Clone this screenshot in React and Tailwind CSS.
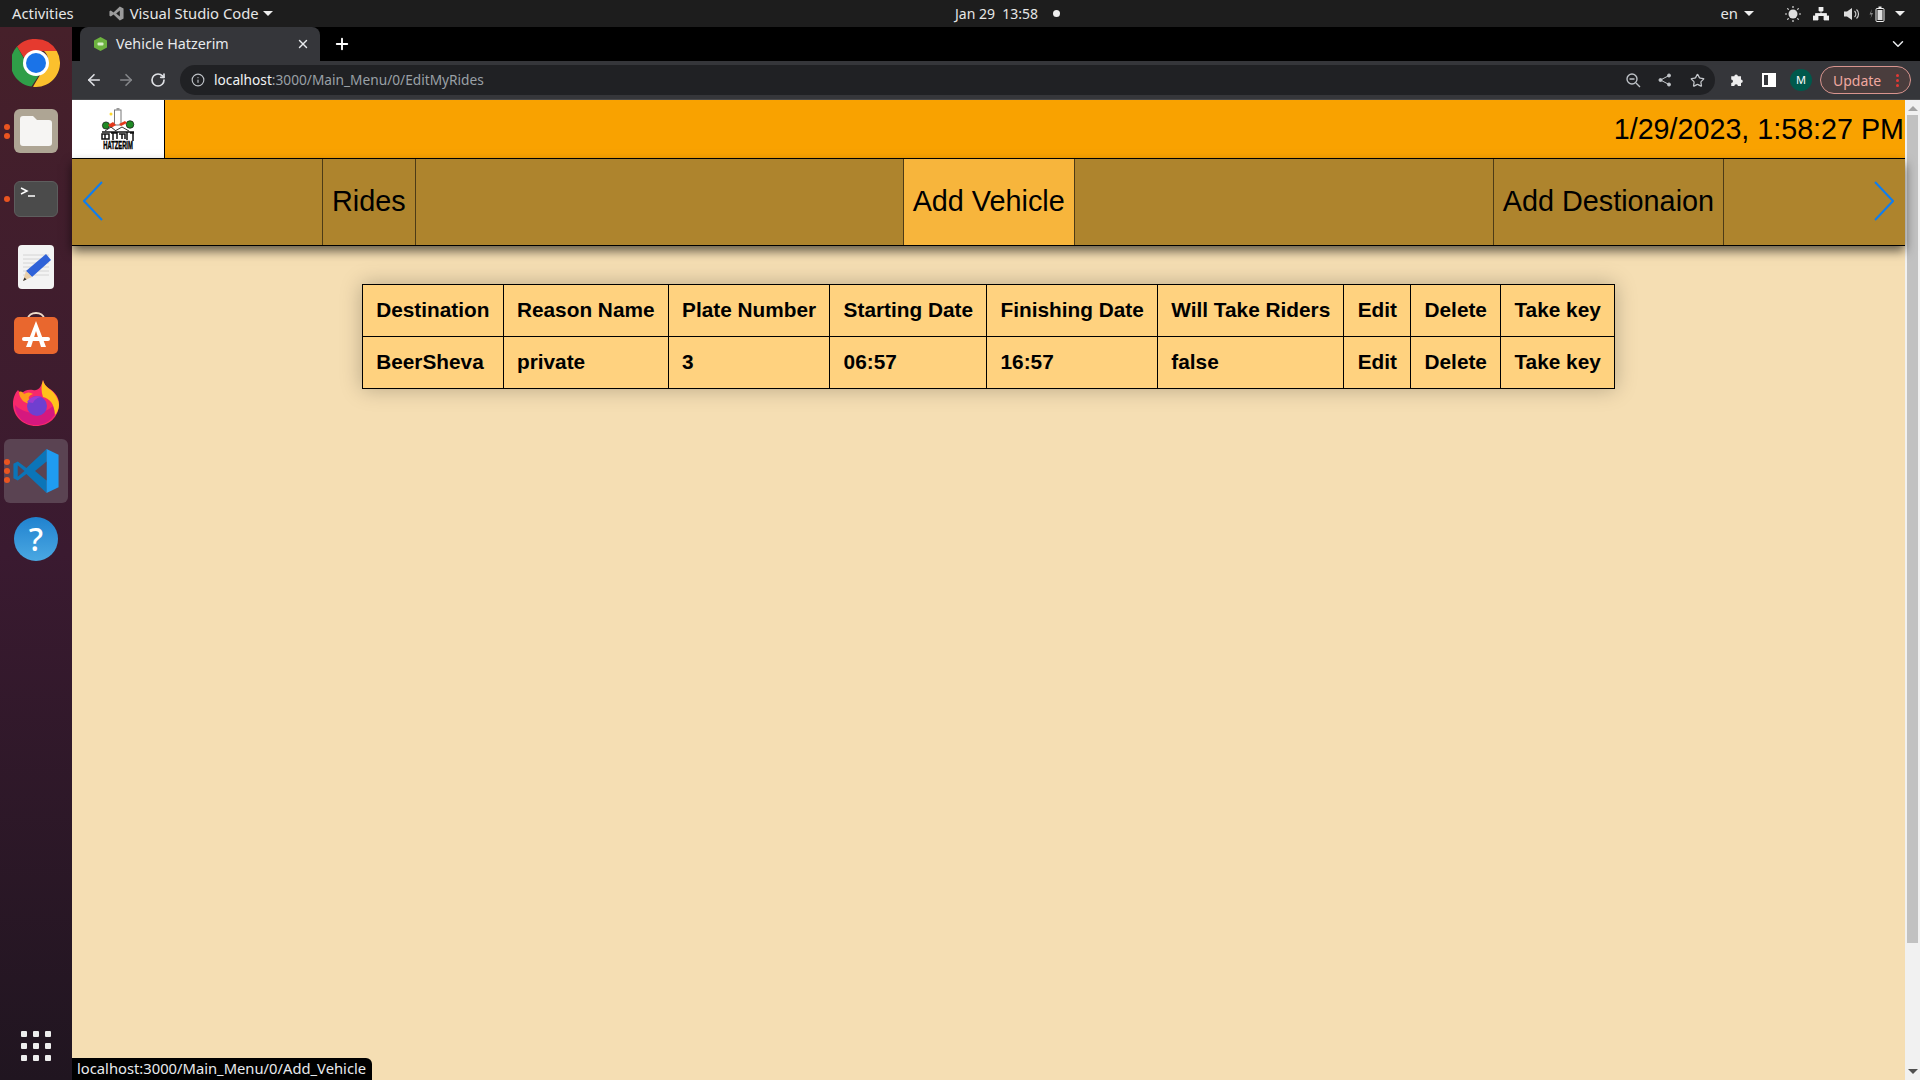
import { ArrowLeft, ArrowRight, RotateCw, Info, Star, X, Plus, ChevronDown } from "lucide-react";

const chromeFont = { fontFamily: '"Noto Sans", sans-serif' };

function ChromeLogo() {
    return (
        <svg width="48" height="48" viewBox="0 0 48 48">
            <path d="M24 0a24 24 0 0 1 20.8 12H24a12 12 0 0 0-11.3 8L5 7.5A24 24 0 0 1 24 0z" fill="#e53a2f" />
            <path d="M5 7.5 14 23a10 10 0 0 0 14 11.7L19.500 47.600A24 24 0 0 1 5 7.500z" fill="#2f9e48" />
            <path d="M44.800 12A24 24 0 0 1 21 47.800L31 31a12 12 0 0 0 1-19z" fill="#fbc02d" />
            <circle cx="24" cy="24" r="13" fill="#fff" />
            <circle cx="24" cy="24" r="10" fill="#1a73e8" />
        </svg>
    );
}

function FilesIcon() {
    return (
        <svg width="46" height="46" viewBox="0 0 46 46">
            <rect x="1" y="1" width="44" height="44" rx="6" fill="#aea594" />
            <path d="M7 11a3 3 0 0 1 3-3h10l4 4h12a3 3 0 0 1 3 3v20a3 3 0 0 1-3 3H10a3 3 0 0 1-3-3z" fill="#f6f5f3" />
        </svg>
    );
}

function TerminalIcon() {
    return (
        <div className="w-[44px] h-[36px] rounded-md bg-[#4b4b4b] border border-[#5e5e5e] relative">
            <svg width="44" height="36" viewBox="0 0 44 36" className="absolute top-0 left-0">
                <path d="M6 6l6 3-6 3M13 14h7" stroke="#fff" strokeWidth="1.500" fill="none" />
            </svg>
        </div>
    );
}

function WriterIcon() {
    return (
        <svg width="38" height="46" viewBox="0 0 38 46">
            <rect x="1" y="1" width="36" height="44" rx="4" fill="#f3f3f3" />
            <path d="M6 11h26M6 15h26M6 19h26M6 23h26M6 27h26M6 31h26" stroke="#d4d4d4" strokeWidth="1" />
            <path d="M29 10l5 6-19 17-6-6z" fill="#2f62d8" />
            <path d="M9 27l6 6-9 4z" fill="#e9cfa9" />
            <path d="M7.500 33.500 6 37l3.500-1.500z" fill="#333" />
        </svg>
    );
}

function AppCenterIcon() {
    return (
        <svg className="-mt-[4px]" width="44" height="42" viewBox="0 0 44 42">
            <path d="M14 7C14 -1 30 -1 30 7" stroke="#f0ddcb" strokeWidth="2" fill="none" />
            <rect x="0" y="5" width="44" height="37" rx="5" fill="#e9672e" />
            <path d="M22 9 32 35h-5l-5-16-5 16h-5z" fill="#fff" />
            <rect x="8" y="25" width="28" height="4" rx="2" fill="#fff" />
        </svg>
    );
}

function FirefoxIcon() {
    return (
        <svg width="46" height="46" viewBox="0 0 46 46">
            <path d="M23 46C10 46 0 36 0 24 0 18 2 13 5 10l3 4c3-4 8-5 12-4 5 1 8-2 10-10 1 4 3 7 7 9 6 4 9 9 9 15 0 13-10 22-23 22z" fill="#f7296b" />
            <path d="M23 45C11 45 2 36 2 25c7 8 28 14 42-3 1 13-8 23-21 23z" fill="#d5187f" />
            <path d="M30 0c1 5 5 8 9 11 5 5 7 10 7 14 0 4-2 8-4 10-1-12-5-16-12-18-2-6-2-11 0-17z" fill="#ffc21c" />
            <path d="M6 12c2-1 4 0 5 2 3-2 6-2 9 0-3 1-5 3-4 5 1 3 5 2 6 4-5 2-9 0-12-2-2-3-4-5-4-9z" fill="#ff9a1d" />
            <circle cx="24" cy="26" r="10" fill="#6f3fd0" />
            <path d="M14 22c3-5 10-7 15-5-4 0-8 3-9 6z" fill="#a23ad0" />
        </svg>
    );
}

function VsCodeIcon() {
    return (
        <svg width="48" height="48" viewBox="0 0 100 100">
            <path d="M72 4 30 44 12 30l-9 5v30l9 5 18-14 42 40z" fill="#0b75b8" />
            <path d="M72 4 97 16v68L72 96z" fill="#1f9cf0" />
            <path d="M72 30 48 50l24 20z" fill="#5a4352" />
            <path d="M12 38 26 50 12 62z" fill="#5a4352" />
        </svg>
    );
}

function HelpIcon() {
    return (
        <div className="w-[44px] h-[44px] rounded-full bg-gradient-to-b from-[#1f82cf] to-[#4aa8e2] flex items-center justify-center text-white text-[32px] font-medium leading-none" style={chromeFont}>?</div>
    );
}

function DockSlot({ children, dots = 0, active = false }) {
    return (
        <div className="h-[68px] w-[72px] flex items-center justify-center relative">
            {active && <div className="absolute left-[4px] top-[2px] w-[64px] h-[64px] rounded-md bg-[#5a4352]"></div>}
            {dots > 0 && (
                <div className="absolute left-[4px] top-0 h-full flex flex-col justify-center gap-[3px] z-10">
                    {Array.from({ length: dots }).map((_, i) => <div key={i} className="w-[6px] h-[6px] rounded-full bg-[#e95420]"></div>)}
                </div>
            )}
            <div className="relative">{children}</div>
        </div>
    );
}

function Dock() {
    return (
        <div className="flex-none w-[72px] h-full flex flex-col pt-[2px] bg-gradient-to-b from-[#46202a] via-[#3a1a30] to-[#201520]">
            <DockSlot><ChromeLogo /></DockSlot>
            <DockSlot dots={2}><FilesIcon /></DockSlot>
            <DockSlot dots={1}><TerminalIcon /></DockSlot>
            <DockSlot><WriterIcon /></DockSlot>
            <DockSlot><AppCenterIcon /></DockSlot>
            <DockSlot><FirefoxIcon /></DockSlot>
            <DockSlot dots={3} active><VsCodeIcon /></DockSlot>
            <DockSlot><HelpIcon /></DockSlot>
            <div className="mt-auto mb-[19px] ml-[21px] grid grid-cols-3 gap-[6px] w-[30px]">
                {Array.from({ length: 9 }).map((_, i) => <div key={i} className="w-[6px] h-[6px] rounded-[1px] bg-[#eeeeee]"></div>)}
            </div>
        </div>
    );
}

function Caret() {
    return <div className="w-0 h-0 border-x-[5px] border-x-transparent border-t-[5px] border-t-[#eeeeee]"></div>;
}

function TopBar() {
    return (
        <div className="flex-none h-[27px] bg-[#1d1d1d] text-[#e6e6e6] text-[14.800px] flex items-center pl-[12px] pr-[15px] relative" style={chromeFont}>
            <span>Activities</span>
            <svg className="ml-[35px]" width="15" height="15" viewBox="0 0 100 100">
                <path d="M72 4 30 44 12 30l-9 5v30l9 5 18-14 42 40 25-12V16z" fill="#9b9b9b" />
                <path d="M72 30 48 50l24 20z" fill="#1d1d1d" />
            </svg>
            <span className="ml-[6px]">Visual Studio Code</span>
            <div className="ml-[4px]"><Caret /></div>
            <div className="absolute left-[955px] top-0 h-full flex items-center text-[14px]">
                <span className="whitespace-pre">Jan 29  13:58</span>
                <div className="ml-[15px] w-[7px] h-[7px] rounded-full bg-[#eeeeee]"></div>
            </div>
            <div className="ml-auto flex items-center">
                <span>en</span>
                <div className="ml-[6px]"><Caret /></div>
                <svg className="ml-[31px]" width="16" height="16" viewBox="0 0 16 16">
                    <circle cx="8" cy="8" r="4.500" fill="#ddd" />
                    <path d="M8 0v2M8 14v2M0 8h2M14 8h2M2.300 2.300l1.400 1.400M12.300 12.300l1.400 1.400M2.300 13.700l1.400-1.400M12.300 3.700l1.400-1.400" stroke="#ddd" strokeWidth="1.200" />
                </svg>
                <svg className="ml-[12px]" width="16" height="14" viewBox="0 0 16 14">
                    <path d="M6 0h4v4H6zM0 9h5v4H0zM11 9h5v4h-5zM8 4v3M2.500 9V6.500h11V9" fill="#eee" stroke="#eee" strokeWidth="0.800" />
                </svg>
                <svg className="ml-[15px]" width="16" height="14" viewBox="0 0 16 14">
                    <path d="M0 4.500h3L8 1v12L3 9.500H0z" fill="#ddd" />
                    <path d="M10.500 4a4 4 0 0 1 0 6M12.500 2.500a6 6 0 0 1 0 9" stroke="#ccc" strokeWidth="1.200" fill="none" />
                </svg>
                <svg className="ml-[9px]" width="16" height="16" viewBox="0 0 16 16">
                    <path d="M3 3 0.500 8.500H2.500L1.500 12.500 4 7H2z" fill="#888" />
                    <rect x="7" y="2.500" width="8" height="13" rx="1" fill="#1d1d1d" stroke="#eee" />
                    <rect x="8.500" y="4" width="5" height="10" fill="#ddd" />
                    <rect x="9.500" y="0.500" width="3" height="2" fill="#eee" />
                </svg>
                <div className="ml-[10px]"><Caret /></div>
            </div>
        </div>
    );
}

function TabStrip() {
    return (
        <div className="flex-none h-[34px] bg-black flex items-end pl-[8px] text-white" style={chromeFont}>
            <div className="w-[240px] h-[34px] bg-[#35363a] rounded-t-lg flex items-center pl-[14px] pr-[10px]">
                <svg width="13" height="14" viewBox="0 0 13 14">
                    <path d="M6.500 0 13 3.500v7L6.500 14 0 10.500v-7z" fill="#6db33f" />
                    <rect x="3.500" y="5.500" width="6" height="3" rx="1" fill="#d8efc8" />
                </svg>
                <span className="ml-[9px] text-[14.300px] text-[#e8eaed] pb-[1px]">Vehicle Hatzerim</span>
                <X className="ml-auto text-[#e8eaed]" size={14} strokeWidth={2.500} />
            </div>
            <div className="h-[34px] flex items-center ml-[13px]"><Plus size={18} strokeWidth={2.500} /></div>
            <div className="ml-auto h-[34px] flex items-center mr-[13px]"><ChevronDown size={18} className="text-[#e8eaed]" /></div>
        </div>
    );
}

function Toolbar() {
    return (
        <div className="flex-none h-[39px] bg-[#35363a] border-b border-[#4a4b4e] flex items-center text-[#dfe1e5]" style={chromeFont}>
            <ArrowLeft className="ml-[13px]" size={18} strokeWidth={2.200} />
            <ArrowRight className="ml-[14px] text-[#85878a]" size={18} strokeWidth={2.200} />
            <RotateCw className="ml-[15px]" size={16} strokeWidth={2.500} />
            <div className="ml-[14px] w-[1535px] h-[30px] rounded-full bg-[#202124] flex items-center pl-[11px] pr-[10px]">
                <Info size={14} className="text-[#bdc1c6]" />
                <span className="ml-[9px] text-[13.700px] text-[#f1f3f4]">localhost<span className="text-[#9aa0a6]">:3000/Main_Menu/0/EditMyRides</span></span>
                <svg className="ml-auto" width="16" height="16" viewBox="0 0 16 16" fill="none" stroke="#bdc1c6" strokeWidth="1.400">
                    <circle cx="7" cy="7" r="5" />
                    <path d="M4.500 7h5M11 11l4 4" />
                </svg>
                <svg className="ml-[17px]" width="14" height="14" viewBox="0 0 14 14" fill="#c4c7cb" stroke="#c4c7cb">
                    <circle cx="11" cy="2.500" r="1.500" />
                    <circle cx="11" cy="11.500" r="1.500" />
                    <circle cx="2.500" cy="7" r="1.500" />
                    <path d="M11 2.500 2.500 7l8.500 4.500" fill="none" />
                </svg>
                <Star className="ml-[18px] text-[#c4c7cb]" size={15} strokeWidth={2} />
            </div>
            <svg className="ml-[14px] -mt-[2px]" width="16" height="16" viewBox="-1 -1 17 18">
                <path d="M1 5h3.500a2 2 0 1 1 4 0H12v3.500a2 2 0 1 1 0 4V16H8.500a2 2 0 1 0-4 0H1v-3.500a2 2 0 1 0 0-4z" fill="#eeeeee" />
            </svg>
            <div className="ml-[17px] w-[14px] h-[14px] border-[2.500px] border-white border-r-[8px] bg-[#35363a]"></div>
            <div className="ml-[14px] w-[22px] h-[22px] rounded-full bg-[#00594c] text-white text-[11px] flex items-center justify-center">M</div>
            <div className="ml-[8px] w-[91px] h-[28px] rounded-full border border-[#d9958f] bg-[#4a3d3d] flex items-center pl-[12px] text-[14px] text-[#f0a8a0]">
                <span>Update</span>
                <div className="ml-[15px] flex flex-col gap-[2px]">
                    <div className="w-[3px] h-[3px] rounded-full bg-[#e53935]"></div>
                    <div className="w-[3px] h-[3px] rounded-full bg-[#e53935]"></div>
                    <div className="w-[3px] h-[3px] rounded-full bg-[#e53935]"></div>
                </div>
            </div>
        </div>
    );
}

function HatzerimLogo() {
    return (
        <svg width="32" height="42" viewBox="0 0 32 42" className="overflow-visible">
            <circle cx="9" cy="6" r="1.500" fill="#ffd92e" />
            <rect x="12.500" y="2" width="6.500" height="15" fill="#fff" stroke="#777" strokeWidth="1" />
            <rect x="14.500" y="0" width="3" height="2" fill="#999" />
            <circle cx="4" cy="17.500" r="3.600" fill="#1f8a25" stroke="#111" strokeWidth="0.700" />
            <circle cx="28" cy="16.500" r="3.800" fill="#1f8a25" stroke="#111" strokeWidth="0.700" />
            <path d="M6 17l5-3 3 3-5 3z" fill="#e5391c" />
            <path d="M17 16l6-3 2 2-6 3z" fill="#e5391c" />
            <path d="M3 23l6-4 5 4M13 23l7-4 7 4" fill="#fff" stroke="#333" strokeWidth="1" />
            <path d="M0 24h32M0 26h7v5H0zM9 25h6v6M11 25v7M17 26h6v5M25 24v8M28 25h4M31 25v8M3 26v5M20 26v5" stroke="#111" strokeWidth="1.500" fill="none" />
            <text transform="translate(16 41) scale(0.97 1.800)" textAnchor="middle" fontSize="6" fontWeight="700" fill="#000" stroke="#000" strokeWidth="0.250" style={{ fontFamily: '"Liberation Sans", sans-serif' }}>HATZERIM</text>
        </svg>
    );
}

function Header() {
    return (
        <div className="flex-none h-[59px] flex bg-[#f9a200] border-b border-black">
            <div className="w-[93px] bg-white border-r border-black flex items-center justify-center">
                <HatzerimLogo />
            </div>
            <div className="ml-auto text-[28.700px] self-center leading-none mr-[1px] text-black">1/29/2023, 1:58:27 PM</div>
        </div>
    );
}

function NavItem({ label, className }) {
    return <div className={`h-full flex items-center px-[9px] border-x border-[#4d3b16] text-[28.800px] text-black ${className}`}>{label}</div>;
}

function Nav() {
    return (
        <div className="flex-none h-[87px] flex items-center bg-[#ae842d] border-b border-black shadow-[0_5px_10px_rgba(0,0,0,0.6)] relative">
            <svg className="absolute left-[11px] top-[22px]" width="20" height="40" viewBox="0 0 20 40" fill="none" stroke="#0d7df2" strokeWidth="2">
                <path d="M19 1 1 20l18 19" />
            </svg>
            <NavItem label="Rides" className="ml-[250px]" />
            <NavItem label="Add Vehicle" className="ml-[487px] bg-[#f7b53c]" />
            <NavItem label="Add Destionaion" className="ml-[418px]" />
            <svg className="absolute right-[11px] top-[22px]" width="20" height="40" viewBox="0 0 20 40" fill="none" stroke="#0d7df2" strokeWidth="2">
                <path d="M1 1l18 19L1 39" />
            </svg>
        </div>
    );
}

const columns = ["Destination", "Reason Name", "Plate Number", "Starting Date", "Finishing Date", "Will Take Riders", "Edit", "Delete", "Take key"];
const row = ["BeerSheva", "private", "3", "06:57", "16:57", "false", "Edit", "Delete", "Take key"];

function RidesTable() {
    return (
        <table className="mt-[38px] mx-auto border-collapse bg-[#ffd27f] font-bold text-[20.800px] text-black shadow-[0_0_20px_rgba(0,0,0,0.25)]">
            <thead>
                <tr>
                    {columns.map((c) => <th key={c} className="border border-black px-[13.250px] pb-[2px] h-[52px] text-left font-bold">{c}</th>)}
                </tr>
            </thead>
            <tbody>
                <tr>
                    {row.map((c, i) => <td key={i} className="border border-black px-[13.250px] pb-[2px] h-[52px] text-left">{c}</td>)}
                </tr>
            </tbody>
        </table>
    );
}

function Scrollbar() {
    return (
        <div className="flex-none w-[15px] bg-[#f1f1f1] flex flex-col items-center">
            <div className="mt-[6px] w-0 h-0 border-x-[5px] border-x-transparent border-b-[5px] border-b-[#a3a3a3]"></div>
            <div className="mt-[4px] w-[11px] h-[828px] bg-[#c1c1c1]"></div>
            <div className="mt-auto mb-[6px] w-0 h-0 border-x-[5px] border-x-transparent border-t-[5px] border-t-[#505050]"></div>
        </div>
    );
}

export default function App() {
    return (
        <div className="w-[1920px] h-[1080px] overflow-hidden flex flex-col relative" style={{ fontFamily: '"Liberation Sans", Arial, sans-serif' }}>
            <TopBar />
            <div className="flex-1 flex min-h-0">
                <Dock />
                <div className="flex-1 flex flex-col min-w-0">
                    <TabStrip />
                    <Toolbar />
                    <div className="flex-1 flex min-h-0">
                        <div className="flex-1 min-w-0 bg-[#f5deb3]">
                            <Header />
                            <Nav />
                            <RidesTable />
                        </div>
                        <Scrollbar />
                    </div>
                </div>
            </div>
            <div className="absolute left-[72px] bottom-0 w-[300px] h-[22px] bg-black rounded-tr-md text-[14.750px] text-[#e8eaed] pl-[5px] pb-[2px] flex items-center" style={chromeFont}>localhost:3000/Main_Menu/0/Add_Vehicle</div>
        </div>
    );
}
